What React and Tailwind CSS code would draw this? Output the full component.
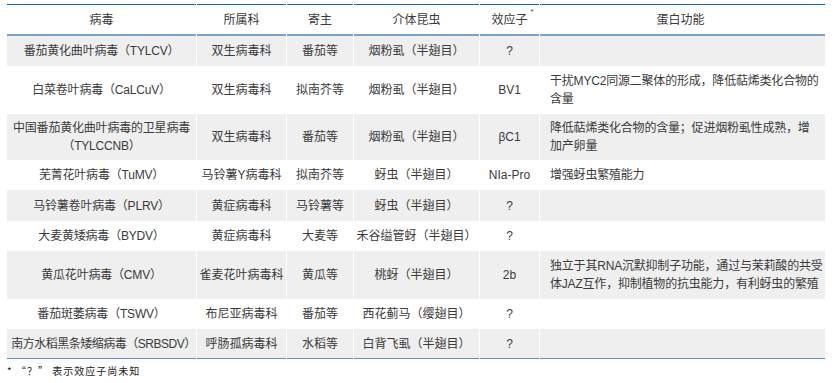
import React from 'react';

const cols = 'grid grid-cols-[189px_89px_66px_125px_59px_285px] gap-x-px';

const rows = [
  { name: ['番茄黄化曲叶病毒（TYLCV）'], family: '双生病毒科', host: '番茄等', vector: '烟粉虱（半翅目）', effector: '?', fn: [], h: 'h-[30px]' },
  { name: ['白菜卷叶病毒（CaLCuV）'], family: '双生病毒科', host: '拟南芥等', vector: '烟粉虱（半翅目）', effector: 'BV1', fn: ['干扰MYC2同源二聚体的形成，降低萜烯类化合物的', '含量'], h: 'h-[48px]' },
  { name: ['中国番茄黄化曲叶病毒的卫星病毒', '（TYLCCNB）'], family: '双生病毒科', host: '番茄等', vector: '烟粉虱（半翅目）', effector: 'βC1', fn: ['降低萜烯类化合物的含量；促进烟粉虱性成熟，增', '加产卵量'], h: 'h-[46px]' },
  { name: ['芜菁花叶病毒（TuMV）'], family: '马铃薯Y病毒科', host: '拟南芥等', vector: '蚜虫（半翅目）', effector: 'NIa-Pro', fn: ['增强蚜虫繁殖能力'], h: 'h-[30px]' },
  { name: ['马铃薯卷叶病毒（PLRV）'], family: '黄症病毒科', host: '马铃薯等', vector: '蚜虫（半翅目）', effector: '?', fn: [], h: 'h-[31px]' },
  { name: ['大麦黄矮病毒（BYDV）'], family: '黄症病毒科', host: '大麦等', vector: '禾谷缢管蚜（半翅目）', effector: '?', fn: [], h: 'h-[30px]' },
  { name: ['黄瓜花叶病毒（CMV）'], family: '雀麦花叶病毒科', host: '黄瓜等', vector: '桃蚜（半翅目）', effector: '2b', fn: ['独立于其RNA沉默抑制子功能，通过与茉莉酸的共受', '体JAZ互作，抑制植物的抗虫能力，有利蚜虫的繁殖'], h: 'h-[48px]' },
  { name: ['番茄斑萎病毒（TSWV）'], family: '布尼亚病毒科', host: '番茄等', vector: '西花蓟马（缨翅目）', effector: '?', fn: [], h: 'h-[30px]' },
  { name: ['南方水稻黑条矮缩病毒（SRBSDV）'], family: '呼肠孤病毒科', host: '水稻等', vector: '白背飞虱（半翅目）', effector: '?', fn: [], h: 'h-[30px]' },
];

export default function App() {
  return (
    <div className="w-[837px] h-[383px] bg-white pt-[4px] pl-[7px] text-[12px] text-[#3b3b3b] font-['Liberation_Sans','Noto_Sans_CJK_SC',sans-serif]">
      <div className="w-[818px]">
        {/* header */}
        <div className={cols + ' h-[32px]'}>
          {['病毒', '所属科', '寄主', '介体昆虫', '效应子', '蛋白功能'].map((t, i) => (
            <div key={t} className={'flex items-center justify-center border-t border-t-[#1d63b0] border-b-2 border-b-[#77a3d3] ' + (i === 5 ? 'pr-[4px]' : '')}>
              <span className="relative">
                {t}
                {i === 4 && <span className="absolute -right-[6px] -top-[3px] text-[8px] leading-none">*</span>}
              </span>
            </div>
          ))}
        </div>
        {rows.map((r, i) => {
          const grey = i % 2 === 0;
          const last = i === rows.length - 1;
          const cell = (grey ? 'bg-[#efefef] ' : '') + (last ? 'border-b border-b-[#5f93cc] ' : '');
          return (
            <div key={r.name[0]} className={cols + ' ' + r.h}>
              <div className={cell + 'flex flex-col items-center justify-center text-center leading-[18px] whitespace-nowrap ' + (last ? 'tracking-[-0.5px] pl-[4px]' : 'tracking-[-0.2px]')}>
                {r.name.map((l) => <span key={l}>{l}</span>)}
              </div>
              <div className={cell + 'flex items-center justify-center whitespace-nowrap'}>{r.family}</div>
              <div className={cell + 'flex items-center justify-center whitespace-nowrap'}>{r.host}</div>
              <div className={cell + 'flex items-center justify-center whitespace-nowrap'}>{r.vector}</div>
              <div className={cell + 'flex items-center justify-center whitespace-nowrap'}>{r.effector}</div>
              <div className={cell + 'flex flex-col justify-center pl-[10px] leading-[18px] whitespace-nowrap tracking-[-0.2px]'}>
                {r.fn.map((l) => <span key={l}>{l}</span>)}
              </div>
            </div>
          );
        })}
        <div className="mt-[5px] text-[10px] leading-[14px] tracking-[1px] text-[#222] font-['Noto_Sans_CJK_SC',serif]">
          * “？” 表示效应子尚未知
        </div>
      </div>
    </div>
  );
}
